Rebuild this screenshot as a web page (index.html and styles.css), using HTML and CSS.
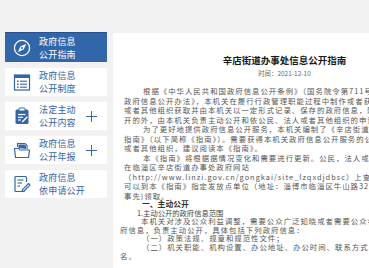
FILE: index.html
```html
<!DOCTYPE html>
<html lang="zh">
<head>
<meta charset="utf-8">
<title>辛店街道办事处信息公开指南</title>
<link rel="stylesheet" href="styles.css">
</head>
<body>
<div class="page">
  <aside class="side">
    <a class="item active">
      <span class="ico">
        <svg viewBox="0 0 18 18" width="18" height="18"><circle cx="9" cy="9" r="7.6" fill="none" stroke="#fff" stroke-width="1.3"/><polygon points="13.3,4.7 10.6,10.6 4.7,13.3 7.4,7.4" fill="#fff"/><circle cx="9" cy="9" r="1" fill="#3064a7"/></svg>
      </span>
      <span class="label">政府信息<br>公开指南</span>
    </a>
    <a class="item">
      <span class="ico">
        <svg viewBox="0 0 18 18" width="18" height="18"><rect x="1.5" y="2" width="15" height="15" fill="none" stroke="#3465a6" stroke-width="1.2"/><rect x="1.5" y="2" width="15" height="3" fill="#3465a6"/><rect x="4" y="7.5" width="1.6" height="1.4" fill="#3465a6"/><rect x="4" y="10.5" width="1.6" height="1.4" fill="#3465a6"/><rect x="4" y="13.5" width="1.6" height="1.4" fill="#3465a6"/><line x1="7" y1="8.2" x2="14" y2="8.2" stroke="#3465a6" stroke-width="1.1"/><line x1="7" y1="11.2" x2="14" y2="11.2" stroke="#3465a6" stroke-width="1.1"/><line x1="7" y1="14.2" x2="14" y2="14.2" stroke="#3465a6" stroke-width="1.1"/></svg>
      </span>
      <span class="label">政府信息<br>公开制度</span>
    </a>
    <a class="item">
      <span class="ico">
        <svg viewBox="0 0 18 18" width="18" height="18"><rect x="2.5" y="2.5" width="13" height="14.5" rx="1.5" fill="#3465a6"/><rect x="6" y="1" width="6" height="3" rx="0.8" fill="#fff" stroke="#3465a6" stroke-width="1"/><line x1="5" y1="7.5" x2="12.5" y2="7.5" stroke="#fff" stroke-width="1.2"/><line x1="5" y1="10.3" x2="10" y2="10.3" stroke="#fff" stroke-width="1.2"/><line x1="5" y1="13" x2="8" y2="13" stroke="#fff" stroke-width="1.2"/><path d="M13.8 9.2 L9.2 14 L8.8 15.4 L10.2 15 L14.8 10.2 Z" fill="#fff"/></svg>
      </span>
      <span class="label">法定主动<br>公开内容</span>
      <span class="plus"></span>
    </a>
    <a class="item">
      <span class="ico">
        <svg viewBox="0 0 18 18" width="18" height="18"><path d="M4.5 6 V2.5 H12 L14 4.5 V8" fill="none" stroke="#3465a6" stroke-width="1.1"/><path d="M5.5 7 V3.5 H11.5 L13 5 V8" fill="#3465a6"/><path d="M1.5 7.5 H6 L7 9 H16.5 L15.5 16.5 H2.5 Z" fill="#fff" stroke="#3465a6" stroke-width="1.2" stroke-linejoin="round"/></svg>
      </span>
      <span class="label">政府信息<br>公开年报</span>
      <span class="plus"></span>
    </a>
    <a class="item">
      <span class="ico">
        <svg viewBox="0 0 18 18" width="18" height="18"><path d="M11.5 16.5 H3 Q2 16.5 2 15.5 V2.5 Q2 1.5 3 1.5 H12.5 Q13.5 1.5 13.5 2.5 V7" fill="none" stroke="#3465a6" stroke-width="1.2"/><line x1="4.5" y1="5" x2="10.5" y2="5" stroke="#3465a6" stroke-width="1.1"/><line x1="4.5" y1="8" x2="9" y2="8" stroke="#3465a6" stroke-width="1.1"/><line x1="4.5" y1="11" x2="7" y2="11" stroke="#3465a6" stroke-width="1.1"/><path d="M15.5 8.5 L17 10 L11 16 L9 16.6 L9.6 14.6 Z" fill="#fff" stroke="#3465a6" stroke-width="1.1" stroke-linejoin="round"/></svg>
      </span>
      <span class="label">政府信息<br>依申请公开</span>
    </a>
  </aside>

  <main class="panel">
    <h1 class="title">辛店街道办事处信息公开指南</h1>
    <div class="time">时间：2021-12-10</div>
    <div class="intro">
      <p class="para"><span class="ind">根据《中华人民共和国政府信息公开条例》（国务院令第711号）和《淄博市</span><br>政府信息公开办法》，本机关在履行行政管理职能过程中制作或者获取的，以及公民、法人<br>或者其他组织获取并由本机关以一定形式记录、保存的政府信息，除依法不予公<br>开的外，由本机关负责主动公开和依公民、法人或者其他组织的申请公开。</p>
      <p class="para"><span class="ind">为了更好地提供政府信息公开服务，本机关编制了《辛店街道办事处政府信息公开</span><br>指南》（以下简称《指南》）。需要获得本机关政府信息公开服务的公民、法人<br>或者其他组织，建议阅读本《指南》。</p>
      <p class="para"><span class="ind">本《指南》将根据据情况变化和需要进行更新。公民，法人或者其他组织可以</span><br>在临淄区辛店街道办事处政府网站<br>（http://www.linzi.gov.cn/gongkai/site_lzqxdjdbsc）上查阅本《指南》，也<br>可以到本《指南》指定发放点单位（地址：淄博市临淄区牛山路321号）查阅或<br>事先)领取。</p>
    </div>
    <div class="section">
      <h2 class="sec-title">一、主动公开</h2>
      <h3 class="sub-title">1.主动公开的政府信息范围</h3>
      <p class="para"><span class="ind2">本机关对涉及公众利益调整，需要公众广泛知晓或者需要公众参与决策的政</span><br>府信息，负责主动公开，具体包括下列政府信息：</p>
      <p class="para list">（一）政策法规、规章和规范性文件；</p>
      <p class="para"><span class="list">（二）机关职能、机构设置、办公地址、办公时间、联系方式、负责人姓</span><br>名。</p>
    </div>
  </main>
</div>
</body>
</html>
```

FILE: styles.css
```css
html, body {
  margin: 0;
  padding: 0;
}
body {
  background: #f2f2f2;
  font-family: "Noto Sans CJK SC", "Noto Sans", sans-serif;
  overflow: hidden;
  width: 369px;
  height: 268px;
}
.page {
  display: flex;
  align-items: flex-start;
  padding: 32px 0 0 5px;
  gap: 6px;
}
.side {
  flex: 0 0 102px;
  display: flex;
  flex-direction: column;
  gap: 6px;
}
.item {
  display: flex;
  align-items: center;
  height: 28px;
  background: #fff;
  color: #3465a6;
  text-decoration: none;
  position: relative;
}
.item.active {
  height: 30px;
  background: #3166a8;
  color: #fff;
  box-sizing: border-box;
  border-top: 1px solid #25508c;
}
.ico {
  flex: 0 0 34px;
  display: flex;
  justify-content: center;
  align-items: center;
}
.ico svg {
  display: block;
}
.label {
  font-size: 9px;
  letter-spacing: 0.2px;
  line-height: 13px;
  white-space: nowrap;
}
.plus {
  position: absolute;
  right: 10px;
  top: 50%;
  width: 11px;
  height: 11px;
  margin-top: -5.5px;
}
.plus::before, .plus::after {
  content: "";
  position: absolute;
  background: #3465a6;
}
.plus::before {
  left: 0;
  right: 0;
  top: 5px;
  height: 1px;
}
.plus::after {
  top: 0;
  bottom: 0;
  left: 5px;
  width: 1px;
}
.panel {
  flex: 0 0 320px;
  background: #fff;
  margin-top: 1px;
  padding-top: 21px;
  min-height: 300px;
}
.title {
  margin: 0;
  text-align: center;
  font-size: 9.5px;
  line-height: 12px;
  font-weight: bold;
  color: #1a1a1a;
}
.time {
  margin-top: 4px;
  text-align: center;
  font-size: 6.3px;
  line-height: 8px;
  color: #666;
  letter-spacing: 0.1px;
}
.intro {
  margin-top: 8px;
  padding-left: 11px;
}
.para {
  margin: 0;
  font-size: 7.4px;
  letter-spacing: 1px;
  line-height: 9.5px;
  color: #555;
  white-space: nowrap;
}
.ind {
  padding-left: 19px;
}
.section {
  padding-left: 7px;
}
.section .para {
  line-height: 8.6px;
}
.sec-title {
  margin: 0;
  padding-left: 22px;
  font-size: 7.8px;
  line-height: 8.6px;
  font-weight: bold;
  color: #333;
}
.sub-title {
  margin: 0;
  padding-left: 17px;
  font-size: 7.3px;
  line-height: 8.6px;
  font-weight: normal;
  color: #444;
}
.ind2 {
  padding-left: 21px;
}
.list {
  padding-left: 22px;
}
```
